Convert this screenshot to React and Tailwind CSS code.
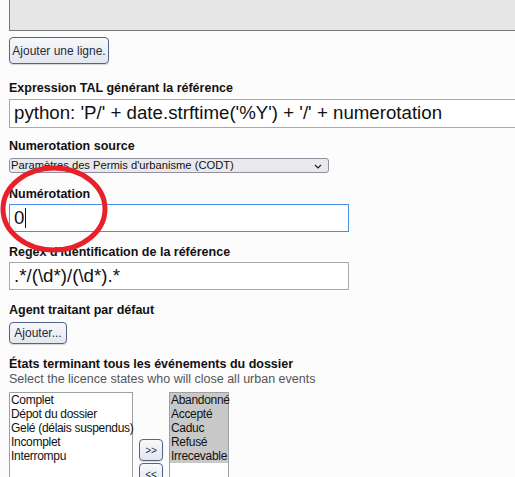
const leftStates = ["Complet", "Dépot du dossier", "Gelé (délais suspendus)", "Incomplet", "Interrompu"];
const rightStates = ["Abandonné", "Accepté", "Caduc", "Refusé", "Irrecevable"];

const Label = ({ children, className = "" }) => (
  <div className={`text-[12.5px] leading-[16px] font-bold text-[#111] ${className}`}>{children}</div>
);

const SmallButton = ({ children, className = "" }) => (
  <button
    className={`rounded-[4px] border border-[#52648a] bg-gradient-to-b from-[#f7f8fa] to-[#e3e7ee] text-[#1f2a3c] shadow-[0_1px_1px_rgba(0,0,0,0.15)] ${className}`}
  >
    {children}
  </button>
);

export default function App() {
  return (
    <div
      className="relative min-h-[477px] w-[515px] overflow-hidden bg-[#fcfcfc] pl-[9px]"
      style={{ fontFamily: '"Liberation Sans", Arial, sans-serif' }}
    >
      {/* datagrid bit cut off at the top */}
      <div className="h-[31px] w-[600px] border border-t-0 border-[#7a7a7a] bg-[#e6e6e6]" />

      <SmallButton className="mt-[6px] h-[27px] w-[100px] text-[12px]">Ajouter une ligne.</SmallButton>

      <Label className="mt-[16px]">Expression TAL générant la référence</Label>
      <div className="mt-[3px] flex h-[29px] w-[600px] items-center border border-[#a9a9a9] bg-white pl-[4px] text-[18.7px] text-[#111]">
        python: 'P/' + date.strftime('%Y') + '/' + numerotation
      </div>

      <Label className="mt-[10px]">Numerotation source</Label>
      <div className="mt-[4px] flex h-[15px] w-[320px] items-center justify-between rounded-[3px] border border-[#8f8f9d] bg-[#e9e9ed] pl-[1px] pr-[6px] text-[11.2px] leading-none text-[#111]">
        <span>Paramètres des Permis d'urbanisme (CODT)</span>
        <svg width="8" height="5" viewBox="0 0 8 5" className="mt-[2px]">
          <path d="M1 1 L4 4 L7 1" fill="none" stroke="#222" strokeWidth="1.2" />
        </svg>
      </div>

      <Label className="mt-[13px]">Numérotation</Label>
      <div className="mt-[2px] flex h-[28px] w-[340px] items-center border border-[#4a8fe6] bg-white pl-[4px] text-[18.7px] text-[#111]">
        0<span className="ml-[1px] h-[20px] w-[1px] bg-[#111]" />
      </div>

      <Label className="mt-[12px]">Regex d'identification de la référence</Label>
      <div className="mt-[2px] flex h-[28px] w-[340px] items-center border border-[#a9a9a9] bg-white pl-[4px] text-[18.7px] text-[#111]">
        .*/(\d*)/(\d*).*
      </div>

      <Label className="mt-[12px]">Agent traitant par défaut</Label>
      <SmallButton className="mt-[4px] h-[22px] w-[58px] text-[12px]">Ajouter...</SmallButton>

      <Label className="mt-[12px] leading-[15px]">États terminant tous les événements du dossier</Label>
      <div className="text-[12.5px] leading-[14px] text-[#555]">
        Select the licence states who will close all urban events
      </div>

      <div className="mt-[6px] flex items-start gap-[6px]">
        <div className="h-[100px] w-[124px] border border-[#a0a0a0] bg-white pl-[1px] text-[12px] leading-[14px] tracking-[-0.3px] text-[#111]">
          {leftStates.map((s) => (
            <div key={s} className="whitespace-nowrap">{s}</div>
          ))}
        </div>
        <div className="mt-[47px] flex flex-col gap-[2px]">
          <SmallButton className="h-[22px] w-[24px] text-[10px]">&gt;&gt;</SmallButton>
          <SmallButton className="h-[22px] w-[24px] text-[10px]">&lt;&lt;</SmallButton>
        </div>
        <div className="h-[100px] w-[60px] border border-[#a0a0a0] bg-white text-[12px] leading-[14px] tracking-[-0.3px] text-[#111]">
          {rightStates.map((s) => (
            <div key={s} className="whitespace-nowrap bg-[#c8c8c8] pl-[1px]">{s}</div>
          ))}
        </div>
      </div>

      {/* red annotation circle */}
      <svg className="pointer-events-none absolute left-0 top-[160px]" width="120" height="100">
        <ellipse cx="54" cy="49" rx="51" ry="41" fill="none" stroke="#e8202a" strokeWidth="5" />
      </svg>
    </div>
  );
}
